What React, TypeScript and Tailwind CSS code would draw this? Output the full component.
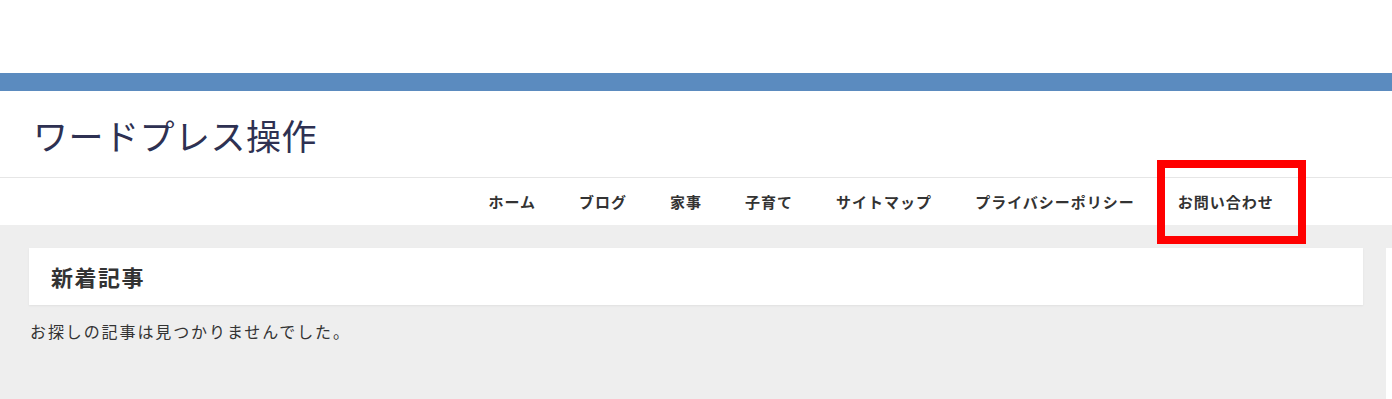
import React from "react";

const navItems = ["ホーム", "ブログ", "家事", "子育て", "サイトマップ", "プライバシーポリシー", "お問い合わせ"];

export default function App() {
  const font = "font-['Noto_Sans_CJK_JP','Noto_Sans',sans-serif]";
  return (
    <div className={`w-[1392px] h-[399px] overflow-hidden bg-white ${font}`}>
      <div className="h-[73px] bg-white" />
      <div className="h-[18px] bg-[#5b8bbf]" />
      <header className="h-[87px] flex items-center pl-[33px] border-b border-[#e6e6e6]">
        <h1 className="text-[35px] leading-none text-[#2e3152] tracking-[0.5px]">ワードプレス操作</h1>
      </header>
      <nav className="h-[47px] flex items-center pl-[467px]">
        {navItems.map((item) => (
          <div key={item} className="relative px-[21.5px]">
            <span className="text-[15px] font-bold text-[#333] tracking-[1px]">{item}</span>
            {item === "お問い合わせ" && (
              <div className="absolute left-[1px] -top-[29px] w-[149px] h-[84px] border-[8px] border-[#ff0000]" />
            )}
          </div>
        ))}
      </nav>
      <div className="h-[174px] bg-[#eeeeee] flex gap-[23px] pl-[29px] pt-[23px]">
        <main className="w-[1334px] shrink-0">
          <div className="h-[57px] bg-white flex items-center pl-[22px] shadow-[0_1px_2px_rgba(0,0,0,0.06)]">
            <h2 className="text-[22px] font-bold text-[#333] tracking-[1.5px]">新着記事</h2>
          </div>
          <p className="mt-[14px] pl-[1px] text-[16px] text-[#333] tracking-[1.9px]">お探しの記事は見つかりませんでした。</p>
        </main>
        <aside className="w-[300px] shrink-0 h-[200px] bg-white" />
      </div>
    </div>
  );
}
